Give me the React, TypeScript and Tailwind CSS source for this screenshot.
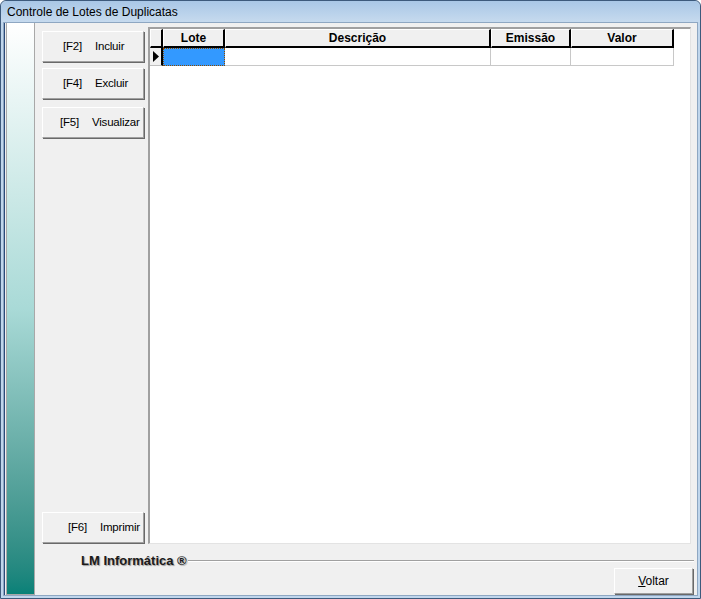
const font = { fontFamily: '"Liberation Sans", Arial, sans-serif' };

const SideButton = ({keyName, label, className}: {keyName: string; label: string; className?: string}) => (
    <button
        className={`flex h-[31px] w-[102px] items-center overflow-hidden text-[11.5px] tracking-[-0.2px] text-black bg-[#f0f0f0] border border-t-white border-l-white border-r-[#a0a0a0] border-b-[#a0a0a0] shadow-[1px_1px_0_#696969] ${className ?? "pl-[20px]"}`}
    >
        <span className="w-[32px] shrink-0 text-left">{keyName}</span>
        <span className="text-left whitespace-nowrap">{label}</span>
    </button>
);

const HeaderCell = ({label, width}: {label: string; width: string}) => (
    <div className={`${width} h-full flex items-center justify-center font-bold text-[12px] bg-[#f0f0f0] border-l border-t border-l-white border-t-white border-r-2 border-b-2 border-r-black border-b-black`}>
        {label}
    </div>
);

export default function App() {
    return (
        <div style={font} className="w-[701px] h-[599px] bg-white">
            <div className="flex h-full w-full flex-col rounded-t-[6px] border border-[#3d5a7c] bg-[#c0d6ec]">
                <div className="h-[21px] flex items-center pl-[6px] text-[12px] text-black bg-gradient-to-b from-[#a9c7e6] to-[#c6daee] rounded-t-[6px]">
                    Controle de Lotes de Duplicatas
                </div>
                <div className="flex flex-1 mx-[2px] mb-[2px] border border-[#8ea7c2] bg-[#f0f0f0]">
                    <div className="w-[31px] h-full border-l border-[#2a4a7a] pl-[1px]">
                        <div className="h-full w-full border-x border-b border-[#a8a8a8] bg-gradient-to-b from-white via-[#a9dad7] to-[#078178]" />
                    </div>
                    <div className="flex flex-1 flex-col">
                        <div className="flex h-[521px] pt-[4px]">
                            <div className="ml-[7px] flex w-[102px] flex-col pt-[4px]">
                                <SideButton keyName="[F2]" label="Incluir" />
                                <SideButton keyName="[F4]" label="Excluir" className="mt-[6px] pl-[20px]" />
                                <SideButton keyName="[F5]" label="Visualizar" className="mt-[8px] pl-[17px]" />
                                <div className="flex-1" />
                                <SideButton keyName="[F6]" label="Imprimir" className="mb-[1px] pl-[25px]" />
                            </div>
                            <div className="ml-[4px] w-[543px] h-[517px] border-l-2 border-t-2 border-l-[#a0a0a0] border-t-[#a0a0a0] border-r border-b border-r-[#e3e3e3] border-b-[#e3e3e3] bg-white">
                                <div className="flex h-[19px] text-black">
                                    <HeaderCell label="" width="w-[13px]" />
                                    <HeaderCell label="Lote" width="w-[62px]" />
                                    <HeaderCell label="Descrição" width="w-[266px]" />
                                    <HeaderCell label="Emissão" width="w-[80px]" />
                                    <HeaderCell label="Valor" width="w-[103px]" />
                                </div>
                                <div className="flex h-[18px]">
                                    <div className="w-[13px] flex items-center justify-center bg-[#f0f0f0] border-r-2 border-b border-r-black border-b-[#c0c0c0]">
                                        <svg width="6" height="11" viewBox="0 0 6 11"><path d="M0 0 L6 5.5 L0 11 Z" fill="#000" /></svg>
                                    </div>
                                    <div className="w-[62px] bg-[#3399ff] border border-dotted border-[#8a4a00]" />
                                    <div className="w-[266px] border-r border-b border-[#c8c8c8]" />
                                    <div className="w-[80px] border-r border-b border-[#c8c8c8]" />
                                    <div className="w-[103px] border-r border-b border-[#c8c8c8]" />
                                </div>
                            </div>
                        </div>
                        <div className="flex items-center h-[16px] mt-[9px]">
                            <span className="ml-[46px] font-bold text-[13px] text-[#1a1a1a] [text-shadow:1px_1px_1px_#9a9a9a]">
                                LM Informática ®
                            </span>
                            <div className="flex-1 ml-[1px] mr-[3px] border-t border-b border-t-[#a0a0a0] border-b-white" />
                        </div>
                        <div className="flex justify-end pr-[4px] mt-[-1px]">
                            <button className="w-[79px] h-[26px] text-[12px] bg-[#f0f0f0] border border-t-white border-l-white border-r-[#a0a0a0] border-b-[#a0a0a0] shadow-[1px_1px_0_#696969]">
                                <span className="underline">V</span>oltar
                            </button>
                        </div>
                    </div>
                </div>
            </div>
        </div>
    );
}
